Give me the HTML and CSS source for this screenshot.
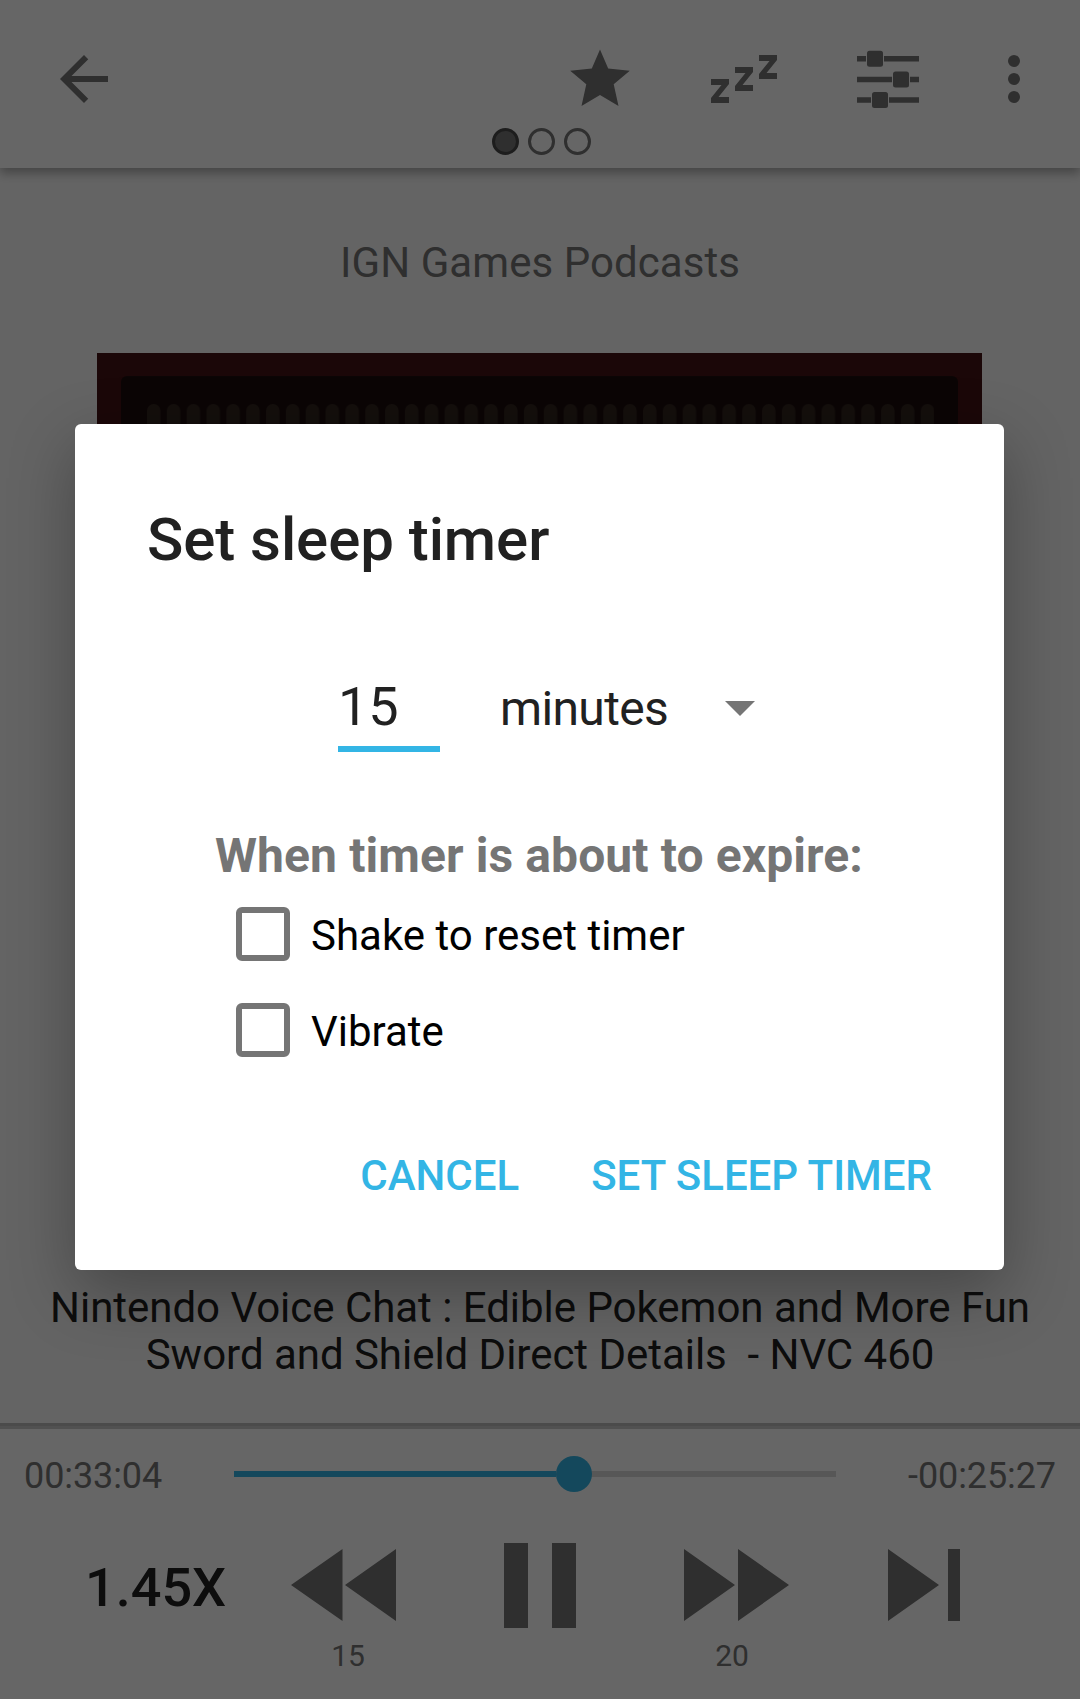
FILE: index.html
```html
<!DOCTYPE html>
<html lang="en">
<head>
<meta charset="utf-8">
<title>Podcast player</title>
<link rel="stylesheet" href="styles.css">
</head>
<body>
<div class="player">
  <header class="toolbar">
    <div class="actions">
      <svg class="back" width="72" height="72" viewBox="0 0 24 24"><path d="M20 11H7.83l5.59-5.59L12 4l-8 8 8 8 1.41-1.41L7.83 13H20z"/></svg>
      <svg class="star" width="60" height="58" viewBox="0 0 60 58"><path d="M30 .5 38.2 19.5 59.8 21.7 43.7 35.3 48.5 57 30 46 11.5 57 16.3 35.3.2 21.7 21.8 19.5z"/></svg>
      <svg class="sleep" width="66" height="48" viewBox="0 0 66 48"><path d="M0 24h18v5L7.5 42H18v6H0v-5l10.500-13H0zM24 12h18v5L31.500 30H42v6H24v-5l10.500-13H24zM48 0h18v5L55.500 18H66v6H48v-5l10.500-13H48z"/></svg>
      <svg class="tune" width="62" height="58" viewBox="0 0 62 58"><path d="M0 6h9v5.500H0zM27 6h35v5.500H27zM0 26.700h35v5.500H0zM53 26.700h9v5.500h-9zM0 47.300h14v5.500H0zM32 47.300h30v5.500H32z"/><rect x="10" y=".7" width="16" height="16" rx="2.500"/><rect x="36" y="21.500" width="16" height="16" rx="2.500"/><rect x="15" y="42" width="16" height="16" rx="2.500"/></svg>
      <svg class="more" width="12" height="48" viewBox="0 0 12 48"><circle cx="6" cy="6" r="6"/><circle cx="6" cy="24" r="6"/><circle cx="6" cy="42" r="6"/></svg>
    </div>
    <div class="pager"><span class="page current"></span><span class="page"></span><span class="page"></span></div>
  </header>
  <main class="content">
    <h1 class="show">IGN Games Podcasts</h1>
    <div class="cover"><div class="cover-panel">
      <svg width="787" height="60"><defs><pattern id="slots" width="19.840" height="60" patternUnits="userSpaceOnUse"><rect width="13.500" height="80" rx="6.700"/></pattern></defs><path fill="url(#slots)" d="M0 0h787v60H0z"/></svg>
    </div></div>
    <p class="episode">Nintendo Voice Chat : Edible Pokemon and More Fun<br>Sword and Shield Direct Details&nbsp; - NVC 460</p>
  </main>
  <footer class="controls">
    <div class="seek">
      <span class="time">00:33:04</span>
      <div class="track"><div class="played"></div><div class="thumb"></div></div>
      <span class="time remaining">-00:25:27</span>
    </div>
    <div class="transport">
      <div class="speed">1.45X</div>
      <div class="control rewind"><svg width="105" height="72"><path d="M0 36 51.500 0v72zM54 36 105 0v72z"/></svg><span>15</span></div>
      <div class="control pause"><svg width="72" height="85"><path d="M0 0h24v85H0zM48 0h24v85H48z"/></svg></div>
      <div class="control forward"><svg width="105" height="72"><path d="M0 0v72l51-36zM54 0v72l51-36z"/></svg><span>20</span></div>
      <div class="control skip"><svg width="72" height="72"><path d="M0 0v72l51-36zM60 0h12v72H60z"/></svg></div>
    </div>
  </footer>
</div>
<div class="scrim">
  <section class="dialog">
    <h2 class="title">Set sleep timer</h2>
    <div class="duration">
      <div class="amount">15</div>
      <div class="unit">minutes</div>
      <svg class="caret" width="30" height="15"><path d="M0 0h30L15 15z"/></svg>
    </div>
    <h3 class="caption">When timer is about to expire:</h3>
    <div class="options">
      <label class="option"><span class="box"></span><span>Shake to reset timer</span></label>
      <label class="option"><span class="box"></span><span>Vibrate</span></label>
    </div>
    <div class="buttons"><span>CANCEL</span><span>SET SLEEP TIMER</span></div>
  </section>
</div>
</body>
</html>
```
FILE: styles.css
```css
* { box-sizing: border-box; }
body { margin: 0; font-family: Roboto, "Liberation Sans", sans-serif; color: #212121; }
h1, h2, h3, p { margin: 0; font-weight: 400; }
svg { display: block; flex: none; fill: #757575; }

.player { display: flex; flex-direction: column; width: 1080px; height: 1699px; overflow: hidden; background: #fafafa; }

/* Toolbar */
.toolbar { height: 168px; background: #fff; box-shadow: 0 5px 10px rgba(0, 0, 0, .32); z-index: 1; }
.actions { display: flex; align-items: center; height: 128px; padding: 30px 60px 0 48px; }
.star { margin: 0 0 3px 450px; }
.sleep { margin-left: 81px; }
.tune { margin: 0 0 1px 80px; }
.more { margin-left: 89px; }
.pager { display: flex; gap: 9px; padding-left: 492px; }
.page { width: 27px; height: 27px; border: 3px solid #757575; border-radius: 50%; }
.current { background: #757575; border-color: #4a4a4a; }

/* Show and episode */
.content { height: 1255px; display: flex; flex-direction: column; align-items: center; }
.show { margin-top: 70px; font-size: 42px; line-height: 50px; letter-spacing: .06px; color: #757575; }
.cover { width: 885px; height: 885px; margin-top: 65px; padding: 23px 24px; background: #441214; align-self: flex-start; margin-left: 97px; }
.cover-panel { height: 837px; padding: 28px 26px; border-radius: 6px; background: #1c0e0e; }
.cover-panel svg { fill: #33261f; }
.episode { margin-top: 46px; font-size: 42px; line-height: 47px; letter-spacing: -.03px; text-align: center; white-space: nowrap; }

/* Playback controls */
.controls { height: 276px; background: #fff; border-top: 3px solid #bcbcbc; box-shadow: inset 0 3px #cacaca; }
.seek { display: flex; align-items: center; height: 96px; padding: 0 24px; }
.time { width: 210px; font-size: 36px; line-height: 42px; letter-spacing: -.1px; color: #757575; padding-top: 4px; }
.remaining { width: 220px; text-align: right; }
.track { width: 602px; height: 6px; background: #d9d9d9; display: flex; align-items: center; }
.played { width: 322px; height: 6px; background: #33b5e5; }
.thumb { width: 36px; height: 36px; border-radius: 50%; background: #33b5e5; }
.transport { display: flex; align-items: flex-start; height: 177px; }
.speed { margin: 34px 0 0 85px; width: 206px; font-size: 54px; line-height: 64px; font-weight: 500; }
.control { padding-top: 27px; }
.control span { display: block; margin-top: 17px; text-align: center; font-size: 30px; line-height: 36px; color: #757575; padding-left: 9px; }
.pause { margin-left: 108px; padding-top: 21px; }
.forward { margin-left: 108px; }
.forward span { padding: 0 9px 0 0; }
.skip { margin-left: 99px; }

/* Sleep timer dialog */
.scrim { position: absolute; inset: 0; width: 1080px; height: 1699px; z-index: 2; background: rgba(0, 0, 0, .6); padding: 424px 76px 0 75px; overflow: hidden; }
.dialog { height: 846px; background: #fff; border-radius: 6px; box-shadow: 0 22px 66px rgba(0, 0, 0, .3); padding: 80px 72px 0; }
.title { font-size: 60px; line-height: 72px; font-weight: 500; letter-spacing: -.07px; }
.duration { display: flex; margin: 93px 0 0 191px; }
.amount { width: 102px; height: 83px; border-bottom: 6px solid #33b5e5; font-size: 54px; line-height: 76px; }
.unit { margin: 6px 0 0 60px; width: 225px; font-size: 48px; line-height: 68px; letter-spacing: -.65px; }
.caret { margin-top: 32px; }
.caption { margin: 76px 0 0; padding-left: 68px; font-size: 48px; line-height: 56px; font-weight: 700; letter-spacing: .1px; color: #757575; white-space: nowrap; }
.options { padding: 23px 0 0 89px; display: flex; flex-direction: column; gap: 42px; }
.option { display: flex; gap: 21px; height: 54px; font-size: 42px; line-height: 58px; color: #000; }
.box { width: 54px; height: 54px; border: 6px solid #757575; border-radius: 6px; }
.buttons { display: flex; justify-content: flex-end; gap: 72px; margin-top: 94px; font-size: 42px; line-height: 50px; font-weight: 500; color: #33b5e5; }
```
